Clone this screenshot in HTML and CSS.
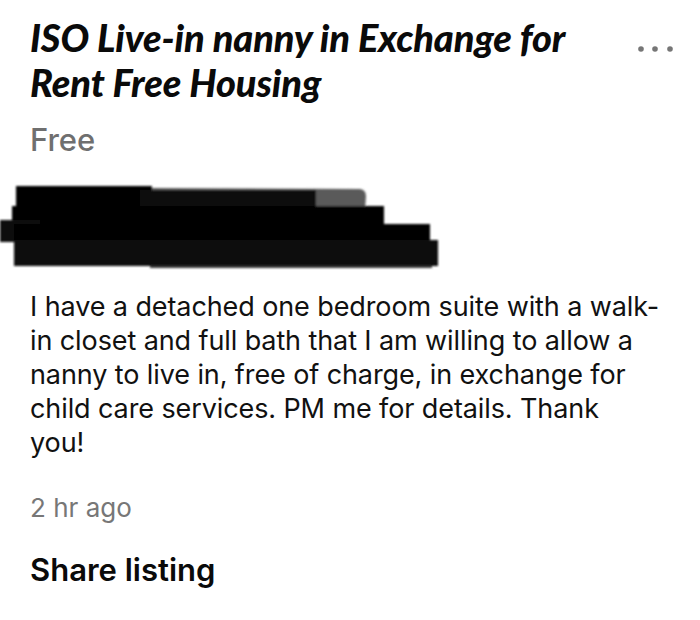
FILE: index.html
```html
<!DOCTYPE html>
<html>
<head>
<meta charset="utf-8">
<link rel="stylesheet" href="styles.css">
</head>
<body>
<div class="page">
  <div class="header">
    <h1 class="title">ISO Live-in nanny in Exchange for Rent Free Housing</h1>
    <svg class="more" width="36" height="8" viewBox="0 0 36 8">
      <circle cx="3" cy="4" r="2.8" fill="#767676"/>
      <circle cx="17" cy="4" r="2.8" fill="#767676"/>
      <circle cx="32" cy="4" r="2.8" fill="#767676"/>
    </svg>
  </div>
  <p class="price">Free</p>
  <svg class="redact" width="440" height="92" viewBox="0 0 440 92">
    <defs>
      <filter id="soft" x="-5%" y="-20%" width="110%" height="140%">
        <feGaussianBlur stdDeviation="1"/>
      </filter>
    </defs>
    <g filter="url(#soft)">
      <path d="M150 8 L360 9 Q366 10 366 16 L365 30 Q363 33 355 33 L150 34 Z" fill="#5a5a5a"/>
      <rect x="150" y="70" width="282" height="18" fill="#3a3a3a"/>
      <rect x="16" y="6" width="136" height="80" fill="#050505"/>
      <rect x="140" y="10" width="176" height="22" fill="#080808"/>
      <rect x="12" y="26" width="372" height="24" fill="#060606"/>
      <rect x="0" y="40" width="40" height="22" fill="#0a0a0a"/>
      <rect x="14" y="44" width="416" height="36" fill="#050505"/>
      <rect x="14" y="60" width="424" height="26" fill="#070707"/>
    </g>
  </svg>
  <p class="desc">I have a detached one bedroom suite with a walk-in closet and full bath that I am willing to allow a nanny to live in, free of charge, in exchange for child care services. PM me for details. Thank<br>you!</p>
  <p class="time">2 hr ago</p>
  <h2 class="share">Share listing</h2>
</div>
</body>
</html>
```

FILE: styles.css
```css
html, body {
  margin: 0;
  padding: 0;
  background: #ffffff;
}

.page {
  padding: 15px 26px 0 30px;
  font-family: Inter, Roboto, "Liberation Sans", sans-serif;
  color: #000;
}

.header {
  display: flex;
  align-items: flex-start;
  justify-content: space-between;
}

.title {
  width: 570px;
  margin: 0;
  font-family: Lato, "Liberation Sans", sans-serif;
  font-weight: 900;
  font-style: italic;
  font-size: 38px;
  line-height: 45px;
  letter-spacing: -0.1px;
  color: #0a0a0a;
}

.more {
  flex: 0 0 auto;
  display: block;
  margin-top: 30px;
}

.price {
  margin: 16px 0 0;
  font-size: 31px;
  line-height: 38px;
  color: #6f6f6f;
  font-weight: 500;
}

.redact {
  display: block;
  margin: 21px 0 0 -30px;
}

.desc {
  max-width: 640px;
  margin: 18px 0 0;
  font-size: 27px;
  line-height: 34px;
  letter-spacing: -0.1px;
  color: #111;
}

.time {
  margin: 31px 0 0;
  font-size: 26px;
  line-height: 34px;
  color: #777;
}

.share {
  margin: 26px 0 0;
  font-size: 31px;
  line-height: 38px;
  font-weight: 600;
  color: #0a0a0a;
}
```
